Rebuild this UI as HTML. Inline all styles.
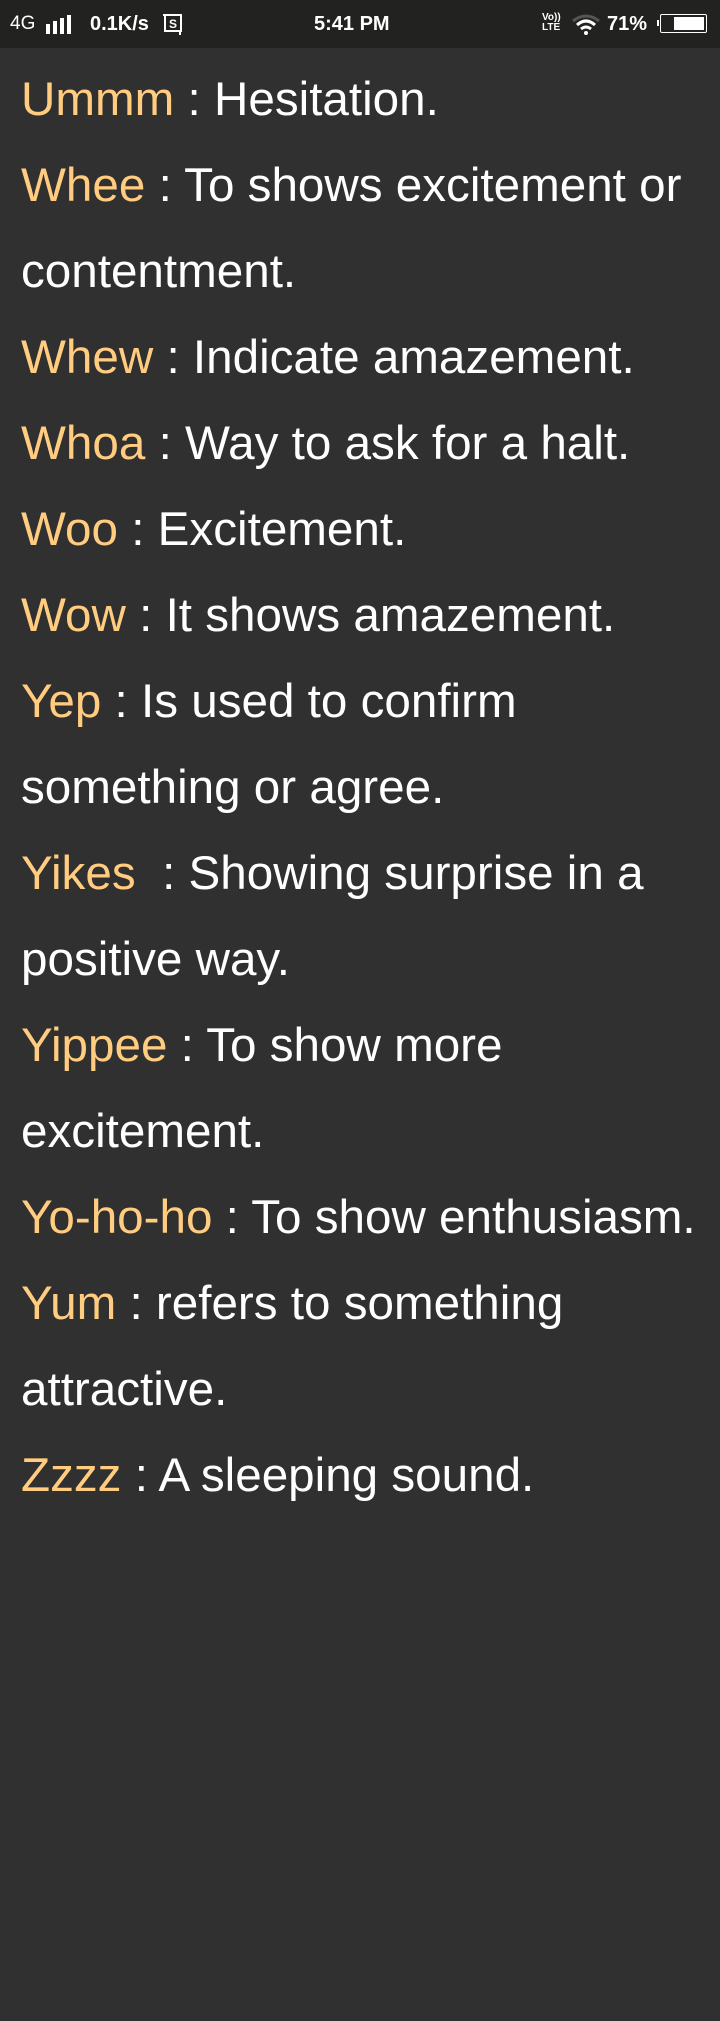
<!DOCTYPE html>
<html><head><meta charset="utf-8"><style>
html,body{margin:0;padding:0;}
body{width:720px;height:2021px;background:#303030;overflow:hidden;font-family:"Liberation Sans",Arial,sans-serif;position:relative;}
.sb{position:absolute;left:0;top:0;width:720px;height:48px;background:#222321;color:#fff;}
.sb span{position:absolute;top:13px;font-size:20px;font-weight:bold;line-height:22px;}
.content{position:absolute;left:21px;top:57px;}
.l{font-size:47.6px;line-height:86px;height:86px;color:#fff;white-space:nowrap;}
.k{color:#FFCC80;}
</style></head><body>
<div class="sb">
<span style="left:10px;font-weight:normal;font-size:19px;">4G</span>
<svg style="position:absolute;left:46px;top:15px" width="26" height="20"><rect x="0" y="9" width="4" height="10" fill="#fff"/><rect x="7" y="6" width="4" height="13" fill="#fff"/><rect x="14" y="3" width="4" height="16" fill="#fff"/><rect x="21" y="0" width="4" height="19" fill="#fff"/></svg>
<span style="left:90px;">0.1K/s</span>
<svg style="position:absolute;left:163px;top:13px" width="22" height="22"><rect x="2" y="2" width="16" height="16" fill="none" stroke="#fff" stroke-width="2"/><line x1="0" y1="2" x2="4" y2="2" stroke="#fff" stroke-width="2"/><line x1="17" y1="18" x2="17" y2="22" stroke="#fff" stroke-width="2"/><text x="6" y="15" font-size="12" fill="#fff" font-family="Liberation Sans" font-weight="bold">S</text></svg>
<span style="left:314px;">5:41 PM</span>
<span style="left:542px;top:13px;font-size:10px;line-height:10px;">Vo))<br>LTE</span>
<svg style="position:absolute;left:571px;top:13px" width="30" height="22"><path d="M2 8 Q15 -2 28 8" stroke="#555" stroke-width="3" fill="none"/><path d="M6 12 Q15 4 24 12" stroke="#fff" stroke-width="3" fill="none"/><path d="M10 16 Q15 12 20 16" stroke="#fff" stroke-width="3" fill="none"/><circle cx="15" cy="20" r="2" fill="#fff"/></svg>
<span style="left:607px;">71%</span>
<div style="position:absolute;left:657px;top:20px;width:2px;height:6px;background:#fff"></div>
<div style="position:absolute;left:660px;top:14px;width:45px;height:17px;border:1px solid #fff;border-radius:2px;"></div>
<div style="position:absolute;left:674px;top:17px;width:30px;height:13px;background:#fff;"></div>
</div>
<div class="content">
<div class="l"><span class="k">Ummm</span> : Hesitation.</div>
<div class="l"><span class="k">Whee</span> : To shows excitement or</div>
<div class="l">contentment.</div>
<div class="l"><span class="k">Whew</span> : Indicate amazement.</div>
<div class="l"><span class="k">Whoa</span> : Way to ask for a halt.</div>
<div class="l"><span class="k">Woo</span> : Excitement.</div>
<div class="l"><span class="k">Wow</span> : It shows amazement.</div>
<div class="l"><span class="k">Yep</span> : Is used to confirm</div>
<div class="l">something or agree.</div>
<div class="l"><span class="k">Yikes</span> &nbsp;: Showing surprise in a</div>
<div class="l">positive way.</div>
<div class="l"><span class="k">Yippee</span> : To show more</div>
<div class="l">excitement.</div>
<div class="l"><span class="k">Yo-ho-ho</span> : To show enthusiasm.</div>
<div class="l"><span class="k">Yum</span> : refers to something</div>
<div class="l">attractive.</div>
<div class="l"><span class="k">Zzzz</span> : A sleeping sound.</div>
</div>
</body></html>
